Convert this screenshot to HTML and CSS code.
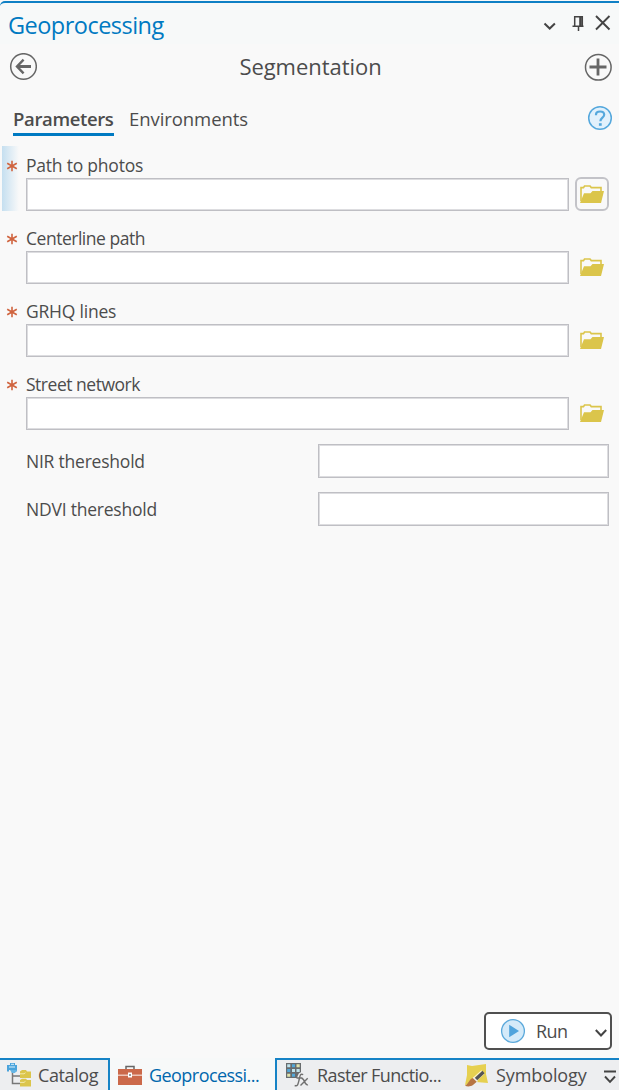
FILE: index.html
```html
<!DOCTYPE html>
<html lang="en">
<head>
<meta charset="utf-8">
<title>Geoprocessing</title>
<link rel="stylesheet" href="styles.css">
</head>
<body>
<svg class="defs" width="0" height="0">
  <symbol id="folder" viewBox="0 0 26 20">
    <path d="M2 17V3.6H4.5L5.5 2H11L12.3 3.6H22V8" fill="none" stroke="#dbc54b" stroke-width="1.6"/>
    <path d="M1 19L5 9.2H11.5L13.5 7H25L22 19Z" fill="#dbc54b"/>
  </symbol>
  <symbol id="star" viewBox="0 0 12 12">
    <path d="M6 .7V11.3M1.2 3.2L10.8 8.8M10.8 3.2L1.2 8.8" fill="none" stroke="#d0643f" stroke-width="1.6"/>
  </symbol>
</svg>
<div class="pane">
  <header class="titlebar">
    <h1 class="title"><span>Geoprocessing</span></h1>
    <svg class="window-icons" width="72" height="20" viewBox="0 0 72 20" fill="none" stroke="#444">
      <path d="M5.5 10.5L10.7 15.5L15.9 10.5" stroke-width="2"/>
      <path d="M35.7 13V3.7H43.3V13M33.5 13.3H44.5M39.5 13V18" stroke-width="1.5"/>
      <path d="M41.5 4V13" stroke-width="2.6"/>
      <path d="M57 3L70.5 16.5M70.5 3L57 16.5" stroke-width="1.9"/>
    </svg>
  </header>
  <div class="toolbar">
    <svg width="28" height="28" viewBox="0 0 28 28" fill="none" stroke="#666">
      <circle cx="14.5" cy="13.5" r="12.8" stroke-width="1.5"/>
      <path d="M22 13.5H8.5" stroke-width="3"/>
      <path d="M14.6 6.7L8 13.5L14.6 20.3" stroke-width="2.4"/>
    </svg>
    <h2 class="tool-name"><span>Segmentation</span></h2>
    <svg width="28" height="28" viewBox="0 0 28 28" fill="none" stroke="#666">
      <circle cx="14.3" cy="14.3" r="12.8" stroke-width="1.5"/>
      <path d="M14 5.5V22.5M5.5 14H22.5" stroke-width="2.8"/>
    </svg>
  </div>
  <nav class="tabs">
    <a class="tab tab-active">Parameters</a>
    <a class="tab">Environments</a>
    <svg class="help" width="26" height="26" viewBox="0 0 26 26" fill="none" stroke="#55a8dd">
      <circle cx="13" cy="13" r="11.3" fill="#e2f1fc" stroke-width="1.5"/>
      <path d="M9 10.3V9.6C9 7.6 10.7 6.5 13.1 6.5C15.6 6.5 17.2 7.8 17.2 9.8C17.2 12.6 13.4 12.7 13.4 16.2" stroke-width="2.2"/>
      <path d="M13.3 18.2V20.8" stroke-width="2.8"/>
    </svg>
  </nav>
  <main class="form">
    <section class="field field-active">
      <svg class="star"><use href="#star"/></svg>
      <label class="label">Path to photos</label>
      <input class="input" type="text">
      <button class="browse browse-focus"><svg width="26" height="20"><use href="#folder"/></svg></button>
    </section>
    <section class="field">
      <svg class="star"><use href="#star"/></svg>
      <label class="label label-tight">Centerline path</label>
      <input class="input" type="text">
      <button class="browse"><svg width="26" height="20"><use href="#folder"/></svg></button>
    </section>
    <section class="field">
      <svg class="star"><use href="#star"/></svg>
      <label class="label">GRHQ lines</label>
      <input class="input" type="text">
      <button class="browse"><svg width="26" height="20"><use href="#folder"/></svg></button>
    </section>
    <section class="field">
      <svg class="star"><use href="#star"/></svg>
      <label class="label label-tight">Street network</label>
      <input class="input" type="text">
      <button class="browse"><svg width="26" height="20"><use href="#folder"/></svg></button>
    </section>
    <section class="row">
      <label class="label">NIR thereshold</label>
      <input class="input" type="text">
    </section>
    <section class="row">
      <label class="label">NDVI thereshold</label>
      <input class="input" type="text">
    </section>
  </main>
  <div class="actions">
    <button class="run">
      <svg width="26" height="26" viewBox="0 0 26 26">
        <circle cx="13" cy="13" r="11.4" fill="#d4eaf9" stroke="#5ba9db" stroke-width="1.3"/>
        <path d="M9.2 6.7L19 13L9.2 19.3Z" fill="#4fa3dc"/>
      </svg>
      <span class="run-text">Run</span>
      <svg class="run-more" width="14" height="10" viewBox="0 0 14 10"><path d="M1.8 2L7 7.5L12.2 2" fill="none" stroke="#444" stroke-width="2"/></svg>
    </button>
  </div>
  <footer class="dock">
    <a class="dock-tab catalog">
      <svg width="26" height="26" viewBox="0 0 26 26">
        <path d="M5.5 9V20.5H14M5.5 13H14" fill="none" stroke="#777" stroke-width="1.5"/>
        <path d="M0 2H3V0H8V2H10V8.5H8V7H2V8.5H0Z" fill="#4aa3db"/>
        <path d="M2 4H8M4 1.3H7" stroke="#d8effc" stroke-width="1"/>
        <path d="M3 7L5 10H8L10 7" fill="#64b5e5"/>
        <path d="M13 8.5L15 7H19L20 8.5H24V15H13ZM13 17L15 15.7H19L20 17H24V23.5H13Z" fill="#dbc54b"/>
        <path d="M13 10.8H17L18.5 9.7M13 19.4H17L18.5 18.3" fill="none" stroke="#f3e9a9" stroke-width="1"/>
      </svg>
      <span>Catalog</span>
    </a>
    <a class="dock-tab current">
      <svg width="26" height="22" viewBox="0 0 26 22">
        <path d="M9 4.5V1.5H17V4.5" fill="none" stroke="#666" stroke-width="1.5"/>
        <path d="M1 4H25V20H1Z" fill="#cb694a"/>
        <path d="M1 10.2H25" stroke="#f4ddd5" stroke-width="1.2"/>
        <path d="M11 7.5H15V12.5H11Z" fill="#fff"/>
        <path d="M12 9H14V11H12Z" fill="#999"/>
      </svg>
      <span>Geoprocessi...</span>
    </a>
    <a class="dock-tab raster">
      <svg width="24" height="26" viewBox="0 0 24 26">
        <path d="M0 0H15V15H0Z" fill="#686c6e"/>
        <path d="M1.2 1.2H4.3V4.3H1.2ZM6 6H9V9H6ZM10.5 6H13.7V9H10.5Z" fill="#bfe3ed"/>
        <path d="M6 1.2H9V4.3H6ZM1.2 6H4.3V9H1.2ZM6 10.7H9V13.8H6Z" fill="#53a8d9"/>
        <path d="M10.5 1.2H13.7V4.3H10.5ZM1.2 10.7H4.3V13.8H1.2Z" fill="#e0e3ae"/>
        <path d="M8.7 22.5C12.5 24 12.3 20 13.2 16.5C14 12 14.5 10.5 17.8 11.6" fill="none" stroke="#edeef0" stroke-width="4.5"/>
        <path d="M8.7 22.5C12 23.8 12.3 20 13.2 16.5C14 12 14.5 10.5 17.2 11.6M10.5 15H16.5M15.5 15.5C19 14.5 18 23 22 21.8M21.7 15.3L14.5 22.5" fill="none" stroke="#707070" stroke-width="1.4"/>
      </svg>
      <span>Raster Functio...</span>
    </a>
    <a class="dock-tab symbology">
      <svg width="24" height="26" viewBox="0 0 24 26">
        <path d="M3 2L8 3L15 2L22 1V11L24 20L12 19L1 22L3 12Z" fill="#e6d050"/>
        <path d="M19 9L10 17" stroke="#fff3c6" stroke-width="5"/>
        <path d="M19.5 9L11.5 16.5" stroke="#555" stroke-width="3.3"/>
        <path d="M9 15L13 18.5L9 22C6 24 3 23.5 1 22.7C5 20.5 5 16 9 15Z" fill="#b77543"/>
        <path d="M9.5 14.5L13.5 18.5" stroke="#eee" stroke-width="1.5"/>
      </svg>
      <span>Symbology</span>
    </a>
    <svg class="overflow" width="14" height="14" viewBox="0 0 14 14"><path d="M1 1.5H13M2 6.5L7 11.8L12 6.5" fill="none" stroke="#444" stroke-width="1.9"/></svg>
  </footer>
</div>
</body>
</html>
```
FILE: styles.css
```css
* { box-sizing: border-box; }
body {
  margin: 0;
  background: #f9f9f9;
  color: #4c4c4c;
  font-family: "Open Sans", "Noto Sans", sans-serif;
}
svg { display: block; flex: none; }
h1, h2 { margin: 0; font-weight: 400; }
button { padding: 0; font: inherit; color: inherit; }
.defs { position: absolute; }
.pane {
  display: flex;
  flex-direction: column;
  height: 1090px;
  overflow: hidden;
}
.titlebar {
  display: flex;
  justify-content: space-between;
  flex: none;
  height: 43px;
  margin-top: 1px;
  padding: 0 8px 0 8px;
  background: #f7f9f9;
  border-top: 2px solid #0f80c5;
  border-top-left-radius: 5px;
}
.title {
  color: #007ac2;
  font-size: 23.5px;
  line-height: 44px;
  letter-spacing: -0.52px;
}
.window-icons { margin-top: 10px; }
.toolbar {
  display: flex;
  align-items: center;
  justify-content: space-between;
  flex: none;
  height: 46px;
  padding: 0 7px 0 9px;
}
.tool-name { margin-top: -2px; font-size: 22px; line-height: 30px; letter-spacing: -0.05px; }
.tabs {
  display: flex;
  flex: none;
  height: 56px;
  padding: 15px 6px 0 13px;
  font-size: 18.5px;
}
.tab { height: 31px; line-height: 28px; margin-right: 15px; white-space: nowrap; letter-spacing: -0.07px; }
.tab-active { font-weight: 600; border-bottom: 3px solid #007ac2; width: 101px; letter-spacing: -0.36px; }
.help { margin-left: auto; }
.form { display: flex; flex-direction: column; flex: 1; }
.field {
  display: grid;
  grid-template-columns: 24px 543px 34px;
  grid-template-rows: 32px 33px;
  margin: 0 0 8px 2px;
  height: 65px;
  flex: none;
}
.field-active { background: linear-gradient(90deg, #c5dff0, #f9f9f9 17px); }
.star { width: 12px; height: 12px; margin: 14px 0 0 4px; }
.label { font-size: 17.5px; line-height: 24px; white-space: nowrap; letter-spacing: -0.22px; }
.label-tight { letter-spacing: -0.48px; }
.field .label { grid-column: 2 / 4; margin-top: 7px; height: 24px; }
.input {
  grid-column: 2;
  height: 33px;
  padding: 0 6px;
  background: #fff;
  border: 1px solid #bfbfc4;
  box-shadow: inset 0 0 0 1px #dddde0;
  font: inherit;
}
.browse {
  display: flex;
  align-items: center;
  justify-content: center;
  grid-column: 3;
  width: 34px;
  height: 34px;
  margin: -1px 0 0 6px;
  background: none;
  border: 2px solid transparent;
  border-radius: 6px;
}
.browse-focus { border-color: #c3c3c8; }
.row {
  display: flex;
  align-items: center;
  justify-content: space-between;
  flex: none;
  height: 34px;
  margin: 6px 10px 8px 26px;
}
.row .input { width: 291px; height: 34px; }
.actions { display: flex; justify-content: flex-end; flex: none; padding: 0 7px 8px; }
.run {
  display: flex;
  align-items: center;
  width: 128px;
  height: 38px;
  padding: 0 2px 0 14px;
  background: #fff;
  border: 2px solid #505050;
  border-radius: 5px;
}
.run-text { margin-left: 10px; font-size: 18px; letter-spacing: -0.6px; }
.run-more { margin: 4px 0 0 auto; }
.dock {
  display: flex;
  flex: none;
  height: 32px;
  background: #edeef0;
}
.dock-tab {
  display: flex;
  flex: none;
  height: 32px;
  border-top: 2px solid #1683c6;
  font-size: 18px;
  line-height: 31px;
  white-space: nowrap;
}
.catalog { width: 110px; padding: 3px 0 0 7px; border-right: 2px solid #1683c6; letter-spacing: -0.4px; }
.catalog span { margin: -3px 0 0 5px; }
.current { width: 165px; padding: 5px 0 0 7px; background: #f7f9f9; color: #0067ad; border-top-color: #f7f9f9; letter-spacing: -0.55px; }
.current span { margin: -5px 0 0 6px; }
.raster { width: 189px; padding: 3px 0 0 9px; border-left: 2px solid #1683c6; letter-spacing: -0.6px; }
.raster span { margin: -3px 0 0 7px; }
.symbology { width: 155px; padding: 3px 0 0 0; letter-spacing: -0.1px; }
.symbology span { margin: -3px 0 0 8px; }
.overflow { margin: 12px 0 0 -16px; }
```
